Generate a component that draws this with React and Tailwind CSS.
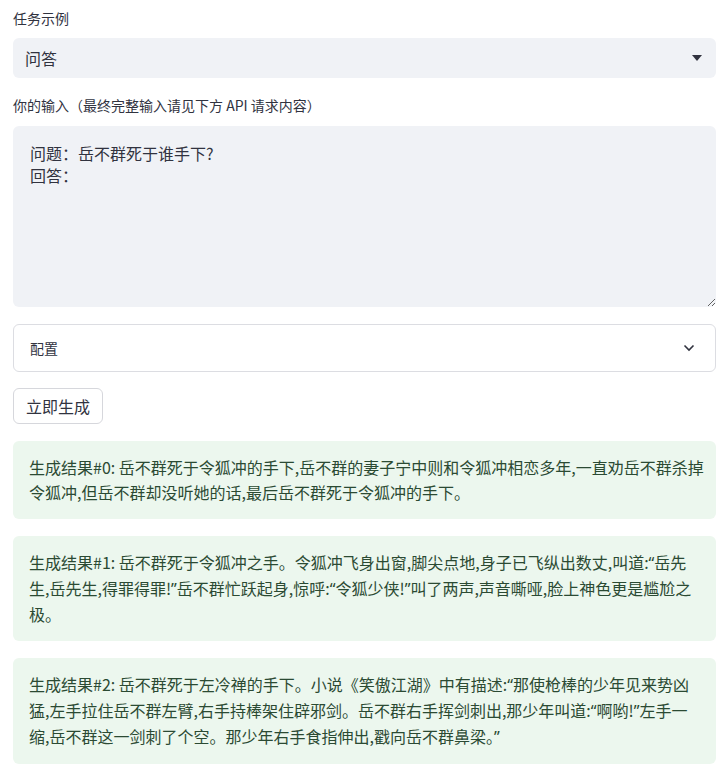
import React from "react";

const results = [
  "生成结果#0: 岳不群死于令狐冲的手下,岳不群的妻子宁中则和令狐冲相恋多年,一直劝岳不群杀掉令狐冲,但岳不群却没听她的话,最后岳不群死于令狐冲的手下。",
  "生成结果#1: 岳不群死于令狐冲之手。令狐冲飞身出窗,脚尖点地,身子已飞纵出数丈,叫道:“岳先生,岳先生,得罪得罪!”岳不群忙跃起身,惊呼:“令狐少侠!”叫了两声,声音嘶哑,脸上神色更是尴尬之极。",
  "生成结果#2: 岳不群死于左冷禅的手下。小说《笑傲江湖》中有描述:“那使枪棒的少年见来势凶猛,左手拉住岳不群左臂,右手持棒架住辟邪剑。岳不群右手挥剑刺出,那少年叫道:“啊哟!”左手一缩,岳不群这一剑刺了个空。那少年右手食指伸出,戳向岳不群鼻梁。”",
];

// curly quotes drawn narrow, like the latin font in the shot
const withQuotes = (text) =>
  text.split(/([“”])/).map((part, i) =>
    part === "“" || part === "”" ? (
      <span key={i} className="font-['Noto_Sans']">
        {part}
      </span>
    ) : (
      part
    )
  );

const App = () => {
  return (
    <div
      className="w-[727px] min-h-[771px] bg-white px-[13px] pt-[9px] text-[#31333f]"
      style={{ fontFamily: '"Noto Sans CJK SC", "Noto Sans", sans-serif' }}
    >
      <p className="text-[14px] leading-[18px] mb-[11px]">任务示例</p>
      <div className="h-[40px] w-[703px] rounded-[6px] bg-[#f0f2f6] flex items-center justify-between pl-[12px] pr-[14px]">
        <span className="text-[16px]">问答</span>
        <svg width="10" height="6" viewBox="0 0 10 6">
          <path d="M0 0 L10 0 L5 6 Z" fill="#31333f" />
        </svg>
      </div>

      <p className="text-[14px] leading-[18px] mt-[18px] mb-[12px]">
        你的输入（最终完整输入请见下方 API 请求内容）
      </p>
      <textarea
        className="block w-[703px] h-[181px] rounded-[6px] bg-[#f0f2f6] px-[17px] pt-[16px] text-[16px] leading-[22px] text-[#31333f] outline-none resize-y"
        defaultValue={"问题：岳不群死于谁手下?\n回答："}
      />

      <div className="mt-[17px] w-[703px] h-[48px] rounded-[6px] border border-[#dcdde2] flex items-center justify-between pl-[16px] pr-[20px]">
        <span className="text-[14px]">配置</span>
        <svg width="12" height="8" viewBox="0 0 12 8">
          <path d="M1.5 1.5 L6 6 L10.5 1.5" fill="none" stroke="#31333f" strokeWidth="1.6" />
        </svg>
      </div>

      <button className="mt-[16px] h-[36px] px-[12px] rounded-[6px] border border-[#d6d7dc] bg-white text-[16px] flex items-center">
        立即生成
      </button>

      <div className="mt-[17px] flex flex-col gap-[17px]">
        {results.map((r, i) => (
          <div
            key={i}
            className="w-[703px] rounded-[6px] bg-[#ecf7ee] pl-[16px] pr-[12px] py-[14px] text-[16px] leading-[25px] text-[#2b4a33]"
          >
            {withQuotes(r)}
          </div>
        ))}
      </div>
    </div>
  );
};

export default App;
